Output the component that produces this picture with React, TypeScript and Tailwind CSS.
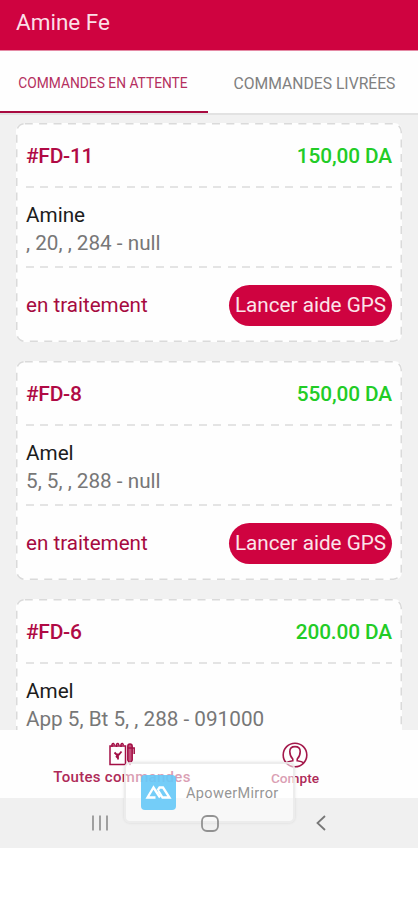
type Order = {
  id: string;
  price: string;
  client: string;
  address: string;
};

const orders: Order[] = [
  { id: '#FD-11', price: '150,00 DA', client: 'Amine', address: ', 20, , 284 - null' },
  { id: '#FD-8', price: '550,00 DA', client: 'Amel', address: '5, 5, , 288 - null' },
  { id: '#FD-6', price: '200.00 DA', client: 'Amel', address: 'App 5, Bt 5, , 288 - 091000' },
];

function Divider() {
  return (
    <div className="h-[2px] bg-[repeating-linear-gradient(90deg,#e4e4e4_0px,#e4e4e4_8px,transparent_8px,transparent_14.4px)]" />
  );
}

function OrderCard({ order }: { order: Order }) {
  return (
    <div className="relative h-[219px] shrink-0 rounded-[8px] bg-[#fefefe] px-[10px]">
      <svg className="pointer-events-none absolute inset-0 h-full w-full" fill="none">
        <rect x="0.75" y="0.75" width="384.5" height="217.5" rx="8" stroke="#dadada" strokeWidth="1.5" strokeDasharray="8 6.4" />
      </svg>
      <div className="flex h-[63px] items-center justify-between pt-[4px] text-[21px] font-medium">
        <span className="tracking-[-0.3px] text-[#b00a45]">{order.id}</span>
        <span className="text-[20.8px] tracking-[-0.1px] text-[#22cc26]">{order.price}</span>
      </div>
      <Divider />
      <div className="flex h-[78px] flex-col pt-[13px] text-[20.7px] leading-[28px]">
        <span className="text-[#1c1c1c]">{order.client}</span>
        <span className="text-[#777777]">{order.address}</span>
      </div>
      <Divider />
      <div className="flex h-[74px] items-center justify-between">
        <span className="text-[20.6px] text-[#a60a40]">en traitement</span>
        <button className="h-[41px] w-[163px] rounded-full bg-[#cf0340] pt-[2px] text-center text-[20.7px] whitespace-nowrap text-[#fbe4ea]">
          Lancer aide GPS
        </button>
      </div>
    </div>
  );
}

function OrdersIcon() {
  return (
    <svg width="26" height="24" viewBox="0 0 26 24" fill="none" stroke="#a30f45" strokeWidth="1.5">
      <path d="M1 4H16.5V22.5H1Z" />
      <path d="M3 5V2.5Q4.5 0 5.5 3.5M7.5 5V2.5Q9 0 10 3.5M12 5V2.5Q13.5 0 14.5 3.5" strokeWidth="1.5" />
      <path d="M5.5 10.5L7.5 12.5H10L12.5 9.5M9 12.5V17.5M7 14L9 16" strokeWidth="1.8" />
      <path d="M18.8 4.5Q18.8 2 21 2Q23.2 2 23.2 4.5V18L21 22L18.8 18Z" fill="#c4507a" />
      <path d="M19 6H25.2V12" />
    </svg>
  );
}

function AccountIcon() {
  return (
    <svg width="26" height="26" viewBox="0 0 26 26" fill="none" stroke="#a3174a" strokeWidth="1.6">
      <circle cx="13" cy="13" r="11.8" />
      <path d="M4.2 20.8Q6 19.5 10.8 18.8V17C8.6 15 7.8 12.2 7.8 9.6C7.8 6.2 10 4.6 13 4.6C16 4.6 18.2 6.2 18.2 9.6C18.2 12.2 17.4 15 15.2 17V18.8Q20 19.5 21.8 20.8" />
    </svg>
  );
}

function MirrorBadge() {
  return (
    <div className="absolute top-[762px] left-[124px] flex h-[61px] w-[171px] items-center rounded-[6px] border-2 border-[#e8e8e8]/80 bg-white/55 shadow-[0_0_3px_rgba(0,0,0,0.1)]">
      <div className="ml-[15px] flex h-[35px] w-[35px] items-center justify-center rounded-[4px] bg-[#65c8f7]/90">
        <svg width="27" height="15" viewBox="0 0 27 15" fill="none" stroke="#fff" strokeWidth="2.3">
          <path d="M10.5 12.5H2.5L8.5 2.5L15 12.5" />
          <path d="M12.5 5.5L14.5 2.5H18L24.5 12.5H17.5L13.5 6" />
        </svg>
      </div>
      <span className="ml-[10px] pt-[3px] text-[14.5px] tracking-[0.35px] text-[#969696]">ApowerMirror</span>
    </div>
  );
}

export default function App() {
  return (
    <div className="relative flex h-[900px] w-[418px] flex-col overflow-hidden bg-white font-['Roboto',sans-serif]">
      <header className="flex h-[51px] shrink-0 items-center border-b border-[#e58aa5] bg-[#cf0340] px-[16px] pb-[5px] text-[22.5px] text-[#fbdfe7]">
        Amine Fe
      </header>
      <nav className="flex h-[62px] shrink-0 bg-[#fefefe] text-center">
        <div className="flex w-[208px] items-center justify-center border-b-2 border-[#a80a40] pt-[4px] pr-[2px] text-[13.8px] text-[#b5305f]">
          COMMANDES EN ATTENTE
        </div>
        <div className="flex flex-1 items-center justify-center pt-[3px] pl-[3px] text-[15.7px] text-[#808080]">COMMANDES LIVRÉES</div>
      </nav>
      <main className="flex h-[617px] shrink-0 flex-col gap-[19px] overflow-hidden border-t-2 border-[#e2e2e2] bg-[#f1f1f1] px-[16px] pt-[8px]">
        {orders.map((order) => (
          <OrderCard key={order.id} order={order} />
        ))}
      </main>
      <footer className="flex h-[68px] shrink-0 bg-[#fefefe] font-medium text-[#ae2a58]">
        <div className="flex w-[244px] flex-col items-center pt-[12px]">
          <OrdersIcon />
          <span className="text-[15px] leading-[23px] tracking-[0.3px]">Toutes commandes</span>
        </div>
        <div className="flex w-[102px] flex-col items-center pt-[12px]">
          <AccountIcon />
          <span className="text-[13.7px] leading-[21px]">Compte</span>
        </div>
      </footer>
      <div className="flex h-[50px] shrink-0 items-center bg-[#f0f0f0] pl-[92px]">
        <svg width="16" height="16" viewBox="0 0 16 16" stroke="#8c8c8c" strokeWidth="1.6">
          <path d="M1 0.5V15.5M8 0.5V15.5M15 0.5V15.5" />
        </svg>
        <svg className="relative z-10 ml-[93px]" width="18" height="17" viewBox="0 0 18 17" fill="none" stroke="#808080" strokeOpacity="0.85" strokeWidth="1.8">
          <rect x="1" y="1" width="16" height="15" rx="5" />
        </svg>
        <svg className="ml-[97px]" width="10" height="16" viewBox="0 0 10 16" fill="none" stroke="#777777" strokeWidth="1.8">
          <path d="M9 1L1.5 8L9 15" />
        </svg>
      </div>
      <MirrorBadge />
    </div>
  );
}
